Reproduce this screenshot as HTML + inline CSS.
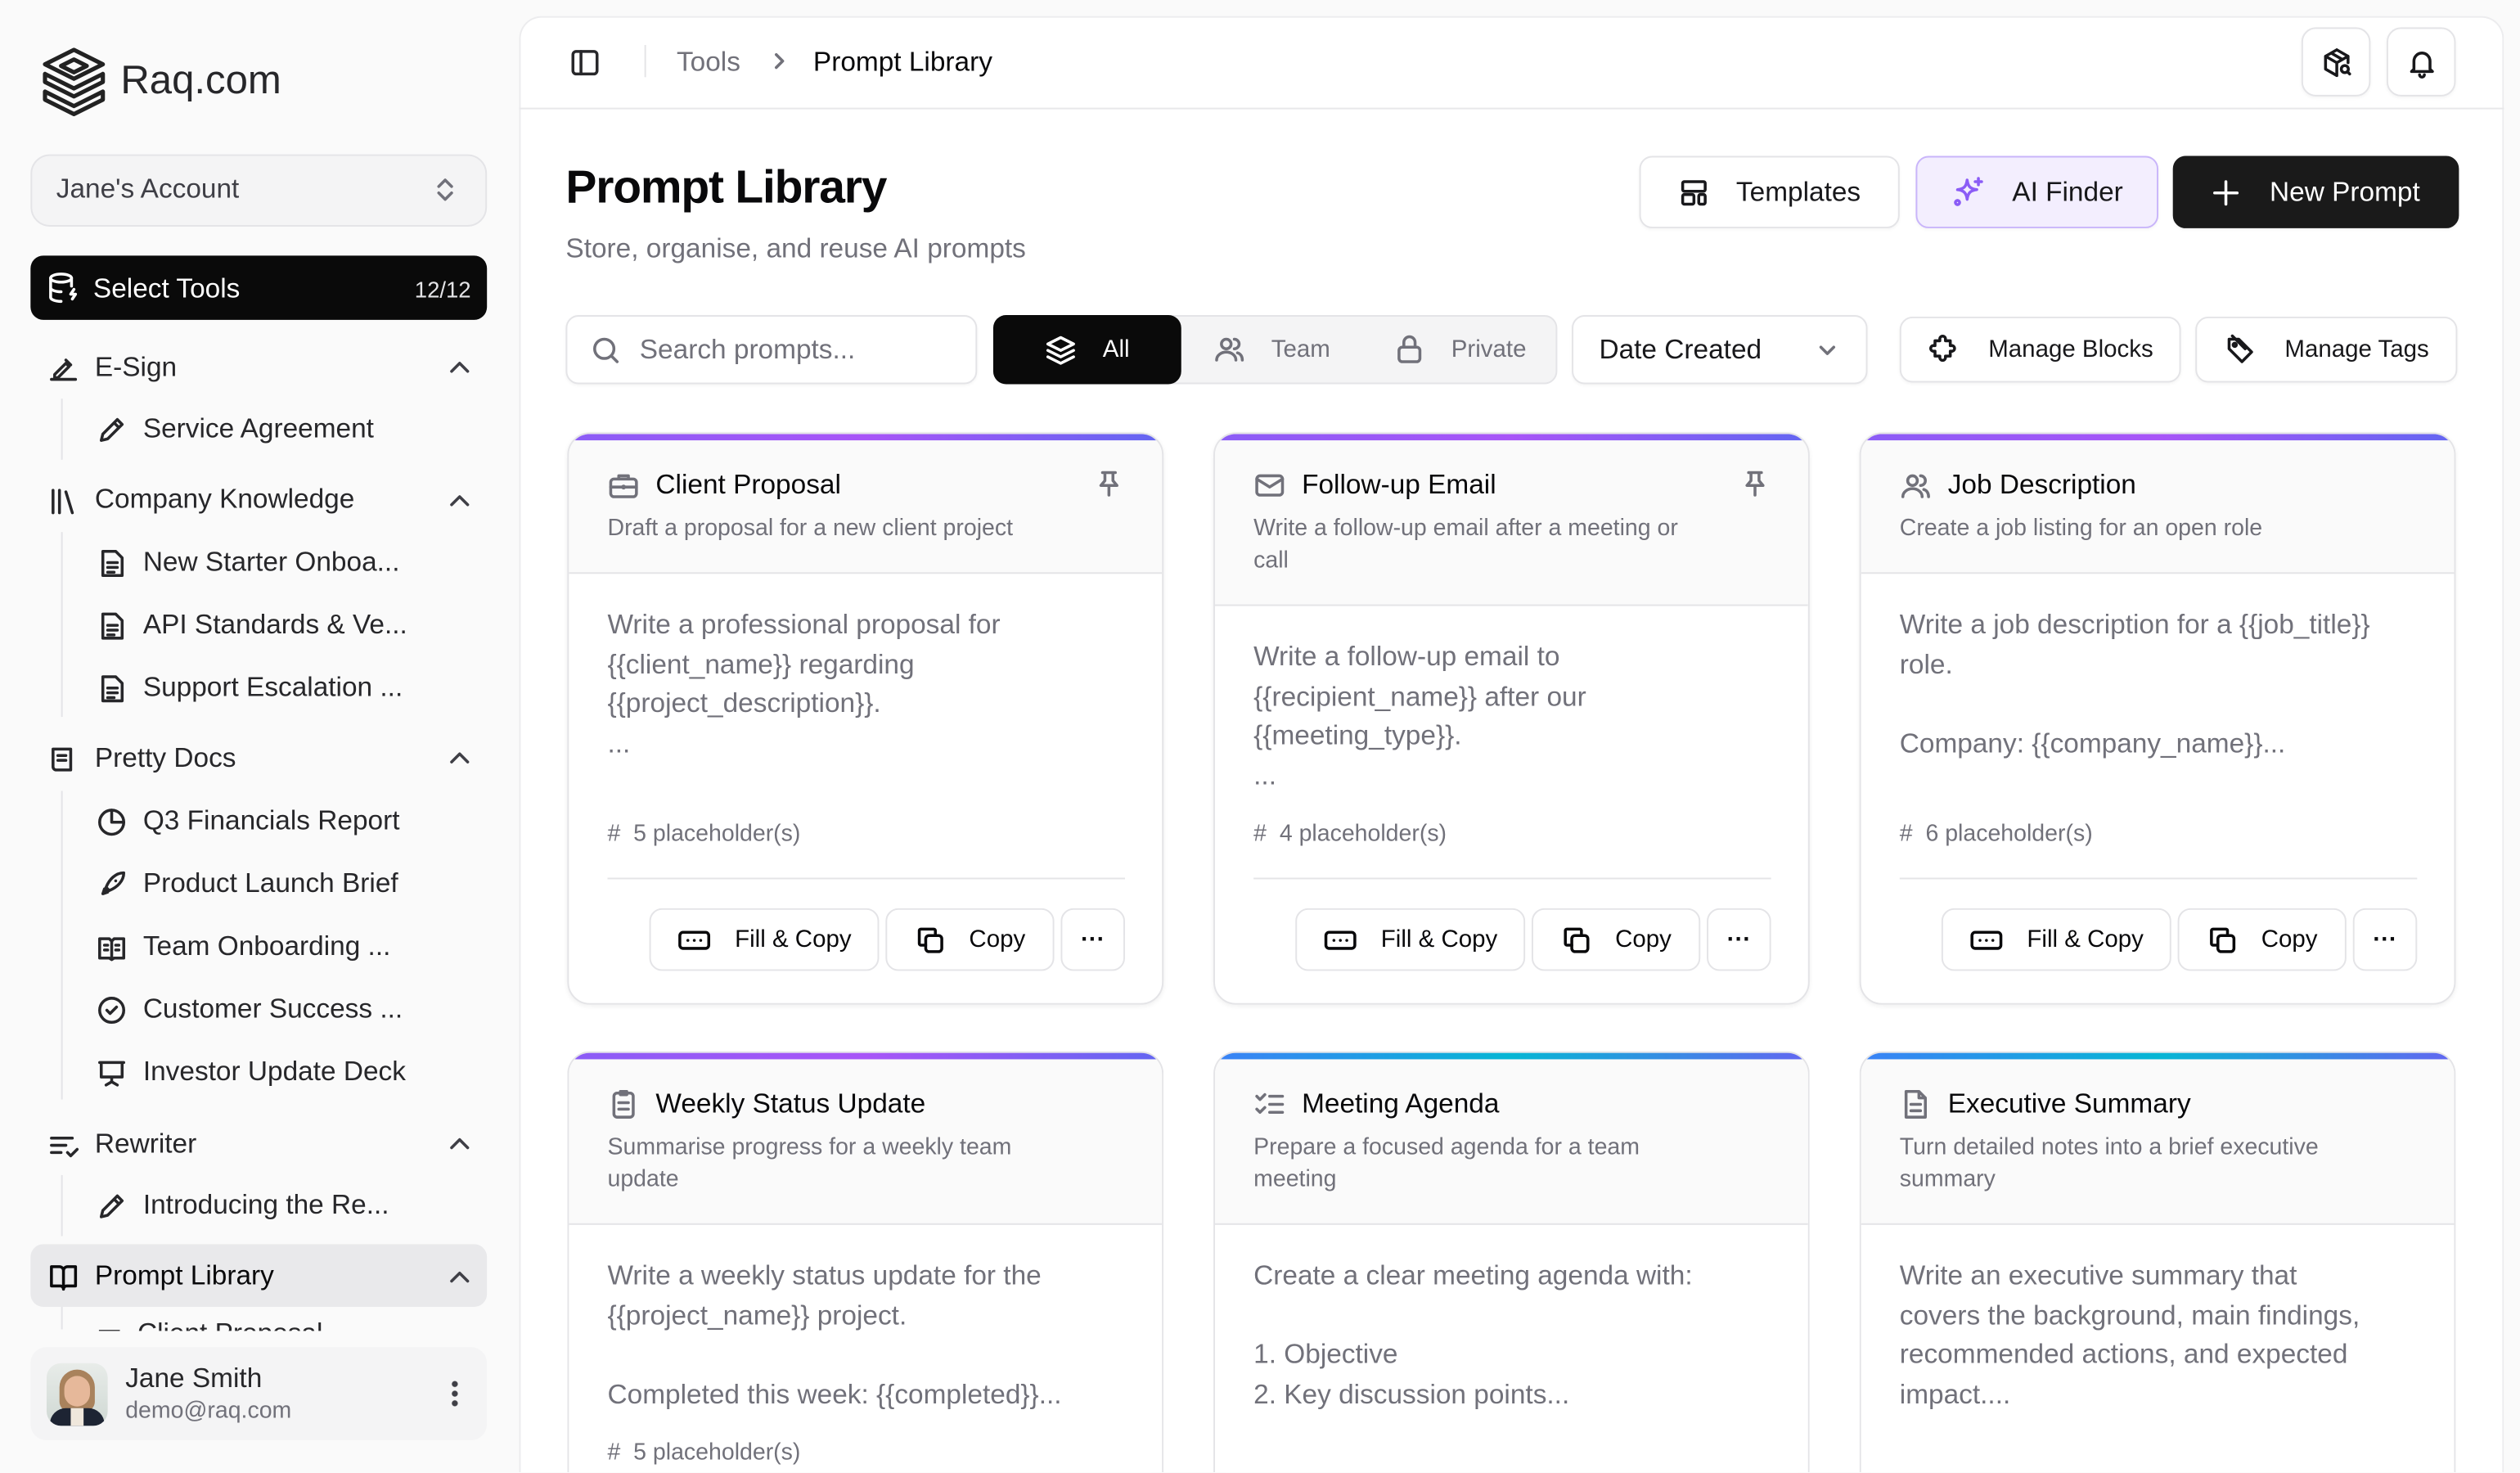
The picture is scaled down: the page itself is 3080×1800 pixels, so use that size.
<!DOCTYPE html>
<html><head><meta charset="utf-8"><style>
*{box-sizing:border-box;margin:0;padding:0}
html,body{width:3080px;height:1800px;overflow:hidden;background:#fafafa}
#r{position:absolute;left:0;top:0;width:1568px;height:916px;overflow:hidden;transform:scale(1.96429);transform-origin:0 0;font-family:"Liberation Sans",sans-serif;color:#18181b}
.a{position:absolute}
svg{fill:none;stroke:currentColor;stroke-width:1.8;stroke-linecap:round;stroke-linejoin:round}
.ni{position:absolute;left:30px;font-size:17px;color:#27272a;display:flex;align-items:center;gap:10px}
.si{position:absolute;left:60px;font-size:17px;color:#27272a;display:flex;align-items:center;gap:10px}
.chev{position:absolute;left:278px;color:#3f3f46}
.btn{position:absolute;border:1px solid #e4e4e7;border-radius:8px;background:#fff;display:flex;align-items:center;justify-content:center;gap:14px;font-size:16px;box-shadow:0 1px 2px rgba(0,0,0,.04)}
.card{position:absolute;width:371px;border:1px solid #e4e4e7;border-radius:14px;background:#fff;overflow:hidden;box-shadow:0 1px 3px rgba(0,0,0,.06)}
.card.b2{border-bottom:none;border-radius:14px 14px 0 0;box-shadow:none}
.bar{height:4px;background:linear-gradient(90deg,#8b5cf6,#a855f7 50%,#6366f1)}
.bar2{height:4px;background:linear-gradient(90deg,#3b82f6,#06b6d4 50%,#6366f1)}
.hd{background:#fafafa;border-bottom:1px solid #e4e4e7;padding:18px 24px 0 24px;position:relative}
.tt{display:flex;align-items:center;gap:10px;font-size:17px;color:#09090b}
.ds{font-size:14.5px;color:#71717a;line-height:20px;margin-top:7px}
.bd{padding:0 24px;font-size:17px;color:#71717a;line-height:24.5px}
.ph{font-size:14.5px;color:#71717a}
.cb{position:absolute;height:39px;border:1px solid #e4e4e7;border-radius:8px;display:flex;align-items:center;justify-content:center;gap:14px;font-size:15px;color:#09090b;background:#fff}
</style></head><body><div id="r">
<!-- sidebar -->
<div class="a" style="left:25px;top:29px"><svg width="42" height="44" viewBox="0 0 42 44" style="stroke:#222;stroke-width:2.6"><path d="M21 2 L39 11 L21 20 L3 11Z M21 8 L29 12 L21 16 L13 12Z"/><path d="M3 17 L21 26 L39 17 M3 17 V22 L21 31 L39 22 V17"/><path d="M3 28 L21 37 L39 28 M3 28 V33 L21 42 L39 33 V28"/></svg></div>
<div class="a" style="left:75px;top:36px;font-size:25px;color:#27272a">Raq.com</div>
<div class="a" style="left:19px;top:96px;width:284px;height:45px;border:1px solid #e4e4e7;border-radius:12px;background:#f4f4f5"></div>
<div class="a" style="left:35px;top:108px;font-size:17px;color:#3f3f46">Jane's Account</div>
<div class="a" style="left:270px;top:109px;color:#71717a"><svg width="14" height="18" viewBox="0 0 14 18"><path d="M3 7l4-4 4 4M3 11l4 4 4-4"/></svg></div>
<div class="a" style="left:19px;top:159px;width:284px;height:40px;border-radius:8px;background:#0a0a0a"></div>
<div class="a" style="left:30px;top:169px;color:#fff"><svg width="19" height="20" viewBox="0 0 19 20"><ellipse cx="8" cy="4" rx="6.5" ry="2.5"/><path d="M1.5 4v12c0 1.4 3 2.5 6.5 2.5M1.5 10c0 1.4 3 2.5 6.5 2.5M14.5 4v5M16 11l-2 3h3l-2 3"/></svg></div>
<div class="a" style="left:58px;top:170px;font-size:17px;color:#fff">Select Tools</div>
<div class="a" style="left:258px;top:172px;font-size:14px;color:#e4e4e7">12/12</div>

<div class="ni" style="top:219px"><svg width="19" height="19" viewBox="0 0 19 19"><path d="M2 16h15M4 13l7-7 2 2-7 7H4zM11 4l3 3"/></svg>E-Sign</div>
<div class="chev" style="top:221px"><svg width="16" height="14" viewBox="0 0 16 14"><path d="M3 10l5-5 5 5"/></svg></div>
<div class="a" style="left:38px;top:248px;width:1px;height:38px;background:#e4e4e7"></div>
<div class="si" style="top:257px"><svg width="19" height="19" viewBox="0 0 19 19"><path d="M3 16l1-4 9-9 3 3-9 9zM11 5l3 3"/></svg>Service Agreement</div>

<div class="ni" style="top:301px"><svg width="19" height="19" viewBox="0 0 19 19"><path d="M3 3v14M7 3v14M11 4l4 13"/></svg>Company Knowledge</div>
<div class="chev" style="top:304px"><svg width="16" height="14" viewBox="0 0 16 14"><path d="M3 10l5-5 5 5"/></svg></div>
<div class="a" style="left:38px;top:331px;width:1px;height:115px;background:#e4e4e7"></div>
<div class="si" style="top:340px"><svg width="19" height="19" viewBox="0 0 19 19"><path d="M4 2h8l4 4v11H4zM7 9h6M7 12h6M7 15h4"/></svg>New Starter Onboa...</div>
<div class="si" style="top:379px"><svg width="19" height="19" viewBox="0 0 19 19"><path d="M4 2h8l4 4v11H4zM7 9h6M7 12h6M7 15h4"/></svg>API Standards &amp; Ve...</div>
<div class="si" style="top:418px"><svg width="19" height="19" viewBox="0 0 19 19"><path d="M4 2h8l4 4v11H4zM7 9h6M7 12h6M7 15h4"/></svg>Support Escalation ...</div>

<div class="ni" style="top:462px"><svg width="19" height="19" viewBox="0 0 19 19"><path d="M3 3h11v13H5a2 2 0 01-2-2zM6 7h5M6 10h5"/></svg>Pretty Docs</div>
<div class="chev" style="top:464px"><svg width="16" height="14" viewBox="0 0 16 14"><path d="M3 10l5-5 5 5"/></svg></div>
<div class="a" style="left:38px;top:492px;width:1px;height:192px;background:#e4e4e7"></div>
<div class="si" style="top:501px"><svg width="19" height="19" viewBox="0 0 19 19"><circle cx="9.5" cy="9.5" r="7.5"/><path d="M9.5 2v7.5H17"/></svg>Q3 Financials Report</div>
<div class="si" style="top:540px"><svg width="19" height="19" viewBox="0 0 19 19"><path d="M4 15l3-1-2-2zM8 13l-2-2c2-5 6-9 11-9 0 5-4 9-9 11zM12 7h0"/></svg>Product Launch Brief</div>
<div class="si" style="top:579px"><svg width="19" height="19" viewBox="0 0 19 19"><path d="M2 4h6l1.5 1.5L11 4h6v12h-6l-1.5 1-1.5-1H2zM9.5 5.5v11M5 8h2M5 11h2M12 8h2M12 11h2"/></svg>Team Onboarding ...</div>
<div class="si" style="top:618px"><svg width="19" height="19" viewBox="0 0 19 19"><circle cx="9.5" cy="9.5" r="7.5"/><path d="M6.5 9.5l2 2 4-4"/></svg>Customer Success ...</div>
<div class="si" style="top:657px"><svg width="19" height="19" viewBox="0 0 19 19"><path d="M2 3h15M3 3v9h13V3M9.5 12v3M6 17l3.5-2 3.5 2"/></svg>Investor Update Deck</div>

<div class="ni" style="top:702px"><svg width="19" height="19" viewBox="0 0 19 19"><path d="M2 5h13M2 9.5h9M2 14h6M12 14l2 2 4-4"/></svg>Rewriter</div>
<div class="chev" style="top:704px"><svg width="16" height="14" viewBox="0 0 16 14"><path d="M3 10l5-5 5 5"/></svg></div>
<div class="a" style="left:38px;top:731px;width:1px;height:38px;background:#e4e4e7"></div>
<div class="si" style="top:740px"><svg width="19" height="19" viewBox="0 0 19 19"><path d="M3 16l1-4 9-9 3 3-9 9zM11 5l3 3"/></svg>Introducing the Re...</div>

<div class="a" style="left:19px;top:774px;width:284px;height:39px;border-radius:8px;background:#e9e9eb"></div>
<div class="ni" style="top:784px;color:#09090b"><svg width="19" height="19" viewBox="0 0 19 19"><path d="M2 3h5a2.5 2.5 0 012.5 2.5V17a2 2 0 00-2-2H2zM17 3h-5a2.5 2.5 0 00-2.5 2.5V17a2 2 0 012-2H17z"/></svg>Prompt Library</div>
<div class="chev" style="top:787px"><svg width="16" height="14" viewBox="0 0 16 14"><path d="M3 10l5-5 5 5"/></svg></div>
<div class="a" style="left:38px;top:813px;width:1px;height:14px;background:#e4e4e7"></div>
<div class="a" style="left:60px;top:822px;width:200px;height:6px;overflow:hidden;font-size:17px;color:#27272a"><div style="margin-top:-2px">▭ &nbsp;Client Proposal</div></div>

<div class="a" style="left:19px;top:838px;width:284px;height:58px;border-radius:10px;background:#f4f4f5"></div>
<div class="a" style="left:29px;top:848px;width:38px;height:39px;border-radius:9px;overflow:hidden;background:linear-gradient(#e8ece9,#cfd8d3)">
<div class="a" style="left:8px;top:4px;width:22px;height:26px;border-radius:11px 11px 6px 6px;background:#a9825c"></div>
<div class="a" style="left:11px;top:8px;width:16px;height:19px;border-radius:8px;background:#e6b89a"></div>
<div class="a" style="left:2px;top:28px;width:34px;height:11px;border-radius:10px 10px 0 0;background:#1d2433"></div>
<div class="a" style="left:15px;top:28px;width:8px;height:11px;background:#efe7dc"></div></div>
<div class="a" style="left:78px;top:848px;font-size:17px;color:#27272a">Jane Smith</div>
<div class="a" style="left:78px;top:870px;font-size:14.5px;color:#71717a">demo@raq.com</div>
<div class="a" style="left:281px;top:858px;width:4px;height:18px;background:radial-gradient(circle,#3f3f46 1.7px,transparent 2px) 0 0/4px 6px"></div>

<!-- main -->
<div class="a" style="left:323px;top:10px;width:1235px;height:906px;background:#fff;border:1px solid #ececee;border-bottom:none;border-radius:14px 14px 0 0"></div>
<div class="a" style="left:323px;top:67px;width:1235px;height:1px;background:#e8e8ea"></div>
<div class="a" style="left:354px;top:29px;color:#27272a"><svg width="20" height="20" viewBox="0 0 20 20"><rect x="2.5" y="3" width="15" height="14" rx="2"/><path d="M7.5 3v14"/></svg></div>
<div class="a" style="left:401px;top:28px;width:1px;height:20px;background:#e4e4e7"></div>
<div class="a" style="left:421px;top:29px;font-size:17px;color:#71717a">Tools</div>
<div class="a" style="left:478px;top:31px;color:#71717a"><svg width="14" height="14" viewBox="0 0 14 14"><path d="M5 3l4 4-4 4"/></svg></div>
<div class="a" style="left:506px;top:29px;font-size:17px;color:#09090b">Prompt Library</div>
<div class="btn" style="left:1432px;top:17px;width:43px;height:43px;border-radius:9px"><svg width="20" height="20" viewBox="0 0 20 20"><path d="M10 2l7 4v4M10 2L3 6v8l7 4M3 6l7 4 7-4M10 10v8M6.5 4l7 4"/><circle cx="15" cy="14" r="2.2"/><path d="M16.6 15.6L18 17"/></svg></div>
<div class="btn" style="left:1485px;top:17px;width:43px;height:43px;border-radius:9px"><svg width="20" height="20" viewBox="0 0 20 20"><path d="M5 14V9a5 5 0 0110 0v5l1.5 1.5h-13zM8.5 17.5a1.5 1.5 0 003 0"/></svg></div>

<div class="a" style="left:352px;top:101px;font-size:29px;font-weight:bold;color:#09090b;letter-spacing:-.6px">Prompt Library</div>
<div class="a" style="left:352px;top:145px;font-size:17px;color:#71717a">Store, organise, and reuse AI prompts</div>

<div class="btn" style="left:1020px;top:97px;width:162px;height:45px;font-size:17px;gap:16px"><svg width="20" height="20" viewBox="0 0 20 20"><rect x="3" y="3" width="14" height="6" rx="1"/><rect x="3" y="11" width="7" height="6" rx="1"/><rect x="13" y="11" width="4" height="6" rx="1"/></svg>Templates</div>
<div class="btn" style="left:1192px;top:97px;width:151px;height:45px;font-size:17px;gap:16px;background:#f3eefe;border-color:#c9b5fa"><svg width="22" height="22" viewBox="0 0 22 22" style="color:#8b5cf6"><path d="M10 3c.5 4 2 5.5 6 6-4 .5-5.5 2-6 6-.5-4-2-5.5-6-6 4-.5 5.5-2 6-6zM17 2v4M15 4h4"/><circle cx="4" cy="17" r="1.3"/></svg>AI Finder</div>
<div class="btn" style="left:1352px;top:97px;width:178px;height:45px;font-size:17px;gap:18px;background:#1a1a1a;border-color:#1a1a1a;color:#fff"><svg width="18" height="18" viewBox="0 0 18 18"><path d="M9 2v14M2 9h14"/></svg>New Prompt</div>

<div class="btn" style="left:352px;top:196px;width:256px;height:43px;justify-content:flex-start;padding-left:14px;gap:11px;color:#71717a;font-size:17px"><svg width="20" height="20" viewBox="0 0 20 20"><circle cx="9" cy="9" r="6"/><path d="M13.5 13.5L17 17"/></svg>Search prompts...</div>
<div class="a" style="left:618px;top:196px;width:351px;height:43px;border:1px solid #e4e4e7;border-radius:8px;background:#f4f4f5"></div>
<div class="a" style="left:618px;top:196px;width:117px;height:43px;border-radius:8px;background:#0a0a0a;color:#fff;display:flex;align-items:center;justify-content:center;gap:16px;font-size:15px"><svg width="20" height="20" viewBox="0 0 20 20"><path d="M10 2l8 4-8 4-8-4zM2 10l8 4 8-4M2 14l8 4 8-4"/></svg>All</div>
<div class="a" style="left:755px;top:207px;display:flex;align-items:center;gap:16px;font-size:15px;color:#71717a"><svg width="20" height="20" viewBox="0 0 20 20"><circle cx="8" cy="7" r="3"/><path d="M2 17c0-3 3-5 6-5s6 2 6 5M13 4a3 3 0 010 6M18 17c0-2-1-4-3-4.5"/></svg>Team</div>
<div class="a" style="left:867px;top:207px;display:flex;align-items:center;gap:16px;font-size:15px;color:#71717a"><svg width="20" height="20" viewBox="0 0 20 20"><rect x="3.5" y="9" width="13" height="9" rx="2"/><path d="M6.5 9V6a3.5 3.5 0 017 0v3"/></svg>Private</div>
<div class="btn" style="left:978px;top:196px;width:184px;height:43px;justify-content:flex-start;padding-left:16px;font-size:17px;color:#18181b">Date Created<svg style="position:absolute;left:150px;color:#71717a" width="16" height="16" viewBox="0 0 16 16"><path d="M4 6l4 4 4-4"/></svg></div>
<div class="btn" style="left:1182px;top:197px;width:175px;height:41px;font-size:15px;gap:18px"><svg width="20" height="20" viewBox="0 0 20 20"><path d="M8 2.5a1.8 1.8 0 013.5 0V4h3v3h1.3a1.8 1.8 0 010 3.5H14.5v3h-3v1.3a1.8 1.8 0 01-3.5 0V13.5H5v-3H3.7a1.8 1.8 0 010-3.5H5V4h3z"/></svg>Manage Blocks</div>
<div class="btn" style="left:1366px;top:197px;width:163px;height:41px;font-size:15px;gap:18px"><svg width="20" height="20" viewBox="0 0 20 20"><path d="M3 3h6l8 8-6 6-8-8zM5 1l8 8"/><circle cx="6.5" cy="6.5" r="1"/></svg>Manage Tags</div>

<!-- cards row 1 -->
<div class="card" style="left:353px;top:269px;height:356px"><div class="bar"></div>
<div class="hd" style="height:83px"><div class="tt"><svg width="20" height="20" viewBox="0 0 20 20" style="color:#71717a"><rect x="2" y="6" width="16" height="11" rx="2"/><path d="M7 6V4h6v2M2 11h16"/><circle cx="10" cy="11" r=".6"/></svg>Client Proposal</div><div class="ds">Draft a proposal for a new client project</div>
<svg class="a" style="left:328px;top:18px;color:#71717a" width="16" height="18" viewBox="0 0 16 18"><path d="M4 2h8M5.5 2v5L3 10h10l-2.5-3V2M8 10v6"/></svg></div>
<div class="bd" style="padding-top:20px">Write a professional proposal for<br>{{client_name}} regarding<br>{{project_description}}.<br>...</div>
<div class="ph a" style="left:24px;top:241px"># &nbsp;5 placeholder(s)</div>
<div class="a" style="left:24px;top:276px;width:322px;height:1px;background:#e4e4e7"></div>
<div class="cb" style="left:50px;top:295px;width:143px"><svg width="22" height="16" viewBox="0 0 22 16"><rect x="2" y="3" width="18" height="10" rx="2"/><path d="M7 8h0M11 8h0M15 8h0"/></svg>Fill &amp; Copy</div>
<div class="cb" style="left:197px;top:295px;width:105px"><svg width="20" height="20" viewBox="0 0 20 20"><rect x="7" y="7" width="10" height="10" rx="2"/><path d="M13 7V4a1 1 0 00-1-1H4a1 1 0 00-1 1v8a1 1 0 001 1h3"/></svg>Copy</div>
<div class="cb" style="left:306px;top:295px;width:40px;font-weight:bold">···</div></div>

<div class="card" style="left:755px;top:269px;height:356px"><div class="bar"></div>
<div class="hd" style="height:103px"><div class="tt"><svg width="20" height="20" viewBox="0 0 20 20" style="color:#71717a"><rect x="2" y="4" width="16" height="12" rx="2"/><path d="M2 6l8 5 8-5"/></svg>Follow-up Email</div><div class="ds">Write a follow-up email after a meeting or<br>call</div>
<svg class="a" style="left:328px;top:18px;color:#71717a" width="16" height="18" viewBox="0 0 16 18"><path d="M4 2h8M5.5 2v5L3 10h10l-2.5-3V2M8 10v6"/></svg></div>
<div class="bd" style="padding-top:20px">Write a follow-up email to<br>{{recipient_name}} after our<br>{{meeting_type}}.<br>...</div>
<div class="ph a" style="left:24px;top:241px"># &nbsp;4 placeholder(s)</div>
<div class="a" style="left:24px;top:276px;width:322px;height:1px;background:#e4e4e7"></div>
<div class="cb" style="left:50px;top:295px;width:143px"><svg width="22" height="16" viewBox="0 0 22 16"><rect x="2" y="3" width="18" height="10" rx="2"/><path d="M7 8h0M11 8h0M15 8h0"/></svg>Fill &amp; Copy</div>
<div class="cb" style="left:197px;top:295px;width:105px"><svg width="20" height="20" viewBox="0 0 20 20"><rect x="7" y="7" width="10" height="10" rx="2"/><path d="M13 7V4a1 1 0 00-1-1H4a1 1 0 00-1 1v8a1 1 0 001 1h3"/></svg>Copy</div>
<div class="cb" style="left:306px;top:295px;width:40px;font-weight:bold">···</div></div>

<div class="card" style="left:1157px;top:269px;height:356px"><div class="bar"></div>
<div class="hd" style="height:83px"><div class="tt"><svg width="20" height="20" viewBox="0 0 20 20" style="color:#71717a"><circle cx="8" cy="7" r="3"/><path d="M2 17c0-3 3-5 6-5s6 2 6 5M13 4a3 3 0 010 6M18 17c0-2-1-4-3-4.5"/></svg>Job Description</div><div class="ds">Create a job listing for an open role</div></div>
<div class="bd" style="padding-top:20px">Write a job description for a {{job_title}}<br>role.<br><br>Company: {{company_name}}...</div>
<div class="ph a" style="left:24px;top:241px"># &nbsp;6 placeholder(s)</div>
<div class="a" style="left:24px;top:276px;width:322px;height:1px;background:#e4e4e7"></div>
<div class="cb" style="left:50px;top:295px;width:143px"><svg width="22" height="16" viewBox="0 0 22 16"><rect x="2" y="3" width="18" height="10" rx="2"/><path d="M7 8h0M11 8h0M15 8h0"/></svg>Fill &amp; Copy</div>
<div class="cb" style="left:197px;top:295px;width:105px"><svg width="20" height="20" viewBox="0 0 20 20"><rect x="7" y="7" width="10" height="10" rx="2"/><path d="M13 7V4a1 1 0 00-1-1H4a1 1 0 00-1 1v8a1 1 0 001 1h3"/></svg>Copy</div>
<div class="cb" style="left:306px;top:295px;width:40px;font-weight:bold">···</div></div>

<!-- row 2 -->
<div class="card b2" style="left:353px;top:654px;height:262px"><div class="bar"></div>
<div class="hd" style="height:103px"><div class="tt"><svg width="20" height="20" viewBox="0 0 20 20" style="color:#71717a"><rect x="4" y="3" width="12" height="15" rx="2"/><path d="M8 2h4v2H8zM7 9h6M7 13h6"/></svg>Weekly Status Update</div><div class="ds">Summarise progress for a weekly team<br>update</div></div>
<div class="bd" style="padding-top:20px">Write a weekly status update for the<br>{{project_name}} project.<br><br>Completed this week: {{completed}}...</div>
<div class="ph a" style="left:24px;top:241px"># &nbsp;5 placeholder(s)</div></div>

<div class="card b2" style="left:755px;top:654px;height:262px"><div class="bar2"></div>
<div class="hd" style="height:103px"><div class="tt"><svg width="20" height="20" viewBox="0 0 20 20" style="color:#71717a"><path d="M2 5l2 2 3-3M2 13l2 2 3-3M10 5h8M10 10h8M10 15h8"/></svg>Meeting Agenda</div><div class="ds">Prepare a focused agenda for a team<br>meeting</div></div>
<div class="bd" style="padding-top:20px">Create a clear meeting agenda with:<br><br>1. Objective<br>2. Key discussion points...</div></div>

<div class="card b2" style="left:1157px;top:654px;height:262px"><div class="bar2"></div>
<div class="hd" style="height:103px"><div class="tt"><svg width="20" height="20" viewBox="0 0 20 20" style="color:#71717a"><path d="M4 2h8l4 4v12H4zM12 2v4h4M7 10h6M7 14h6"/></svg>Executive Summary</div><div class="ds">Turn detailed notes into a brief executive<br>summary</div></div>
<div class="bd" style="padding-top:20px">Write an executive summary that<br>covers the background, main findings,<br>recommended actions, and expected<br>impact....</div></div>
</div></body></html>
